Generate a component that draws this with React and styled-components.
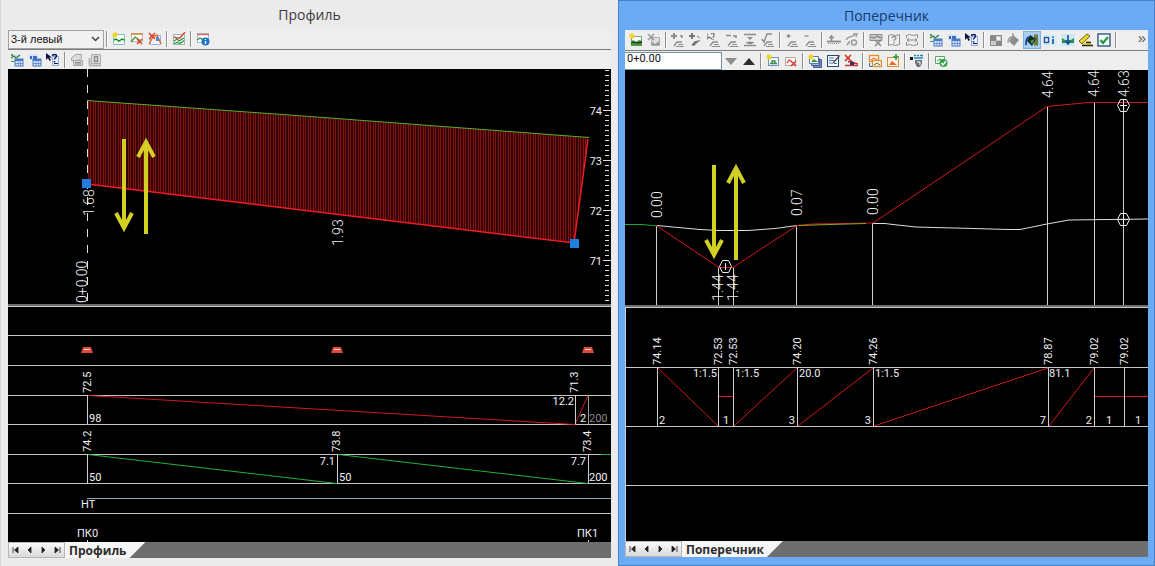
import React from "react";
import styled, { createGlobalStyle, css } from "styled-components";

const GlobalStyle = createGlobalStyle`
  *, *::before, *::after { box-sizing: border-box; }
  body {
    margin: 0;
    background: #ebebeb;
    color: #222;
    font-family: "Liberation Sans", Arial, sans-serif;
    font-size: 12px;
  }
`;

/* ---------- window frame ---------- */

const Workspace = styled.main`
  display: grid;
  grid-template-columns: minmax(0, 618fr) minmax(0, 537fr);
  align-items: start;
`;

const Window = styled.section`
  display: flex;
  flex-direction: column;
  ${(p) =>
    p.$active
      ? css`
          background: #6babf6;
          border: 1px solid #4480c4;
          padding: 0 6px 8px 6px;
        `
      : css`
          background: #ebebeb;
          border-left: 1px solid #d4d4d4;
          padding: 0 7px 8px 7px;
        `}
`;

const Title = styled.h1`
  margin: 0;
  height: 29px;
  padding-top: 5px;
  text-align: center;
  font-family: "Open Sans", "Noto Sans", sans-serif;
  font-size: 14px;
  font-weight: 400;
  line-height: 20px;
  color: ${(p) => (p.$active ? "#17396b" : "#3c3c3c")};
`;

/* ---------- toolbars ---------- */

const Toolbar = styled.div`
  display: flex;
  align-items: center;
  height: ${(p) => (p.$last ? 19 : 21)}px;
  padding-left: ${(p) => (p.$inset ? 2 : 0)}px;
  background: #eeeeee;
  border-bottom: ${(p) => (p.$last ? "0" : "1px solid #7c7c7c")};
  overflow: hidden;
`;

const Separator = styled.span`
  flex: none;
  width: 2px;
  height: 16px;
  margin: 0 2px;
  border-left: 1px solid #8f8f8f;
  border-right: 1px solid #fafafa;
`;

const ToolButton = styled.button`
  flex: none;
  display: flex;
  align-items: center;
  justify-content: center;
  width: 18px;
  height: 18px;
  margin: 0;
  padding: 0;
  border: 1px solid ${(p) => (p.$pressed ? "#7fb0dc" : "transparent")};
  background: ${(p) => (p.$pressed ? "#a9cdee" : "transparent")};
  color: inherit;
`;

const ToolIcon = styled.svg`
  flex: none;
  display: block;
  width: 14px;
  height: 14px;
`;

const Select = styled.select`
  appearance: none;
  flex: none;
  width: 96px;
  height: 19px;
  padding: 0 16px 0 2px;
  border: 1px solid #a3a3a3;
  border-radius: 0;
  background: transparent;
  color: #111;
  font-family: "Liberation Sans", Arial, sans-serif;
  font-size: 11px;
  line-height: 16px;
`;

const SelectBox = styled.span`
  flex: none;
  display: grid;
  align-items: center;
  justify-items: end;
  background: #f1f1f1;
  > * { grid-area: 1 / 1; }
`;

const Chevron = styled.svg`
  width: 9px;
  height: 6px;
  margin-right: 4px;
  pointer-events: none;
`;

const StationInput = styled.input`
  flex: none;
  width: 97px;
  height: 18px;
  padding: 0 2px 4px;
  border: 1px solid #6c93a6;
  border-left: 0;
  border-radius: 0;
  background: #fff;
  color: #111;
  font-family: "Roboto", sans-serif;
  font-size: 11px;
  line-height: 12px;
`;

const More = styled.button`
  margin-left: auto;
  padding: 0 2px 4px;
  border: 0;
  background: none;
  color: #555;
  font-family: "Liberation Sans", Arial, sans-serif;
  font-size: 15px;
  line-height: 16px;
`;

/* ---------- drawing panes ---------- */

const Pane = styled.svg`
  display: block;
  width: 100%;
  height: auto;
  background: #000;
`;

const Splitter = styled.div`
  height: 3px;
  background: #6f6f6f;
  border-bottom: 1px solid #c9c9c9;
`;

const BandText = styled.text`
  font-family: "Roboto", sans-serif;
  font-size: 11px;
  fill: ${(p) => (p.$dim ? "#8a8a8a" : "#f0f0f0")};
`;

const CadText = styled.text`
  font-family: "Roboto", sans-serif;
  font-size: 14px;
  font-weight: 300;
  fill: #f0f0f0;
`;

/* ---------- sheet tabs ---------- */

const TabBar = styled.div`
  display: flex;
  height: 16px;
  background: #6e6e6e;
`;

const TabNav = styled.div`
  display: flex;
  width: 57px;
  border: 1px solid #b8b8b8;
  background: linear-gradient(#fafafa, #d9d9d9);
`;

const NavButton = styled.button`
  flex: 1;
  display: flex;
  align-items: center;
  justify-content: center;
  padding: 0;
  border: 0;
  background: none;
`;

const Tab = styled.button`
  padding: 0 19px 0 4px;
  border: 0;
  background: #f6f6f6;
  clip-path: polygon(0 0, 100% 0, calc(100% - 16px) 100%, 0 100%);
  color: #2c2c2c;
  font-family: "Open Sans", "Noto Sans", sans-serif;
  font-size: 12px;
  font-weight: 700;
  line-height: 15px;
`;

/* ---------- icons, each on a 14 x 14 field ---------- */

const g = "#8c8c8c";

const Grid = ({ x = 5, y = 6, c = "#4a78c8" }) => (
  <g>
    <rect x={x} y={y} width="8" height="7" fill="#dfeaf8" stroke={c} />
    <path d={`M${x} ${y + 1}h8`} stroke={c} strokeWidth="2" />
    <path d={`M${x + 3} ${y}v7M${x + 5.5} ${y}v7M${x} ${y + 4.5}h8`} stroke={c} strokeWidth=".7" />
  </g>
);
const Sun = ({ x = 3, y = 3 }) => (
  <path d={`M${x} ${y - 3}v6M${x - 3} ${y}h6M${x - 2} ${y - 2}l4 4M${x + 2} ${y - 2}l-4 4`} stroke="#f3d423" strokeWidth="1.1" />
);
const Cross = ({ x = 7, y = 7, s = 5, c = "#e0402c" }) => (
  <path d={`M${x} ${y}l${s} ${s}M${x + s} ${y}l${-s} ${s}`} stroke={c} strokeWidth="1.5" />
);
const Hill = ({ x = 3, y = 8 }) => (
  <g stroke={g} fill="none">
    <path d={`M${x} ${y + 5}l3-4h5`} strokeWidth="1.3" />
    <path d={`M${x + 4} ${y + 3.5}h5M${x + 2} ${y + 5.5}h8`} />
  </g>
);
const Page = ({ c = "#4c78ad" }) => <rect x="1.5" y="1.5" width="11" height="11" fill="#f7fbff" stroke={c} />;

const ICONS = {
  profileNew: (
    <>
      <path d="M1.500 2.500h11v10h-11z" fill="#f8fff8" stroke="#7fbfb8" />
      <Sun />
      <path d="M2 8l2-1 3 2 3-2 2.500 1" stroke="#168b2d" strokeWidth="1.500" fill="none" />
    </>
  ),
  profileDelete: (
    <>
      <path d="M1.500 1.500h11v8h-11z" fill="#fff" stroke="#b9b4a4" />
      <path d="M1 2h12" stroke="#e57d34" strokeWidth="1.500" />
      <path d="M1 10l4-5 3 2 2 2" stroke="#2f9b37" strokeWidth="1.300" fill="none" />
      <Cross x={7} y={7} />
    </>
  ),
  profileClear: (
    <>
      <path d="M2.500 3.500h10v9h-10z" fill="#f4f6ff" stroke="#9faed4" />
      <path d="M1 12l4-7 4-2 4 9" stroke="#da6a2e" fill="none" strokeWidth="1.400" />
      <path d="M8 5h3v4H8z" fill="#5a86d0" />
      <Cross x={1} y={1} s={6} />
    </>
  ),
  profileEdit: (
    <>
      <path d="M1.500 2.500h11v10h-11z" fill="#fff" stroke="#a6b4a6" />
      <path d="M2 9l3-2 2 2 5-3M2 11.500l3-1 3 1 4-3" stroke="#18923b" strokeWidth="1.200" fill="none" />
      <path d="M2 5l3 1 3 0 5-6" stroke="#cf4636" strokeWidth="1.400" fill="none" />
    </>
  ),
  profileInfo: (
    <>
      <rect x="1.500" y="1.500" width="11" height="9" fill="#fff" stroke="#a7b9cc" />
      <path d="M1 2.500h12" stroke="#d86c66" strokeWidth="1.500" />
      <path d="M1 8l3-2 3 2" stroke="#28963c" strokeWidth="1.300" fill="none" />
      <circle cx="9.500" cy="9.500" r="4" fill="#1c72cf" />
      <path d="M9.500 7v1M9.500 9v3" stroke="#fff" strokeWidth="1.400" />
    </>
  ),
  tableProfile: (
    <>
      <path d="M1 1.500h9v7H1z" fill="#dcecdc" />
      <path d="M1 5l3-2 2 2 4-3M1 2h2" stroke="#2f7f43" strokeWidth="1.300" fill="none" />
      <path d="M1 8.500h4" stroke="#5f8f62" />
      <Grid />
    </>
  ),
  tableBand: (
    <>
      <path d="M1 1h9v6H1z" fill="#d5e4fa" />
      <path d="M2 3h2v3H2zM5 3h4v3H5z" fill="#3a69c7" />
      <Grid />
    </>
  ),
  help: (
    <>
      <path d="M6.500 3.500h6v9h-6z" fill="#eaf1ff" stroke="#91a7d3" />
      <path d="M0 0v7l2-2 1.500 3 1.500-1-1.500-2.500H6z" fill="#0b1640" />
      <path d="M6.500 3c0-2 4-2 4 0 0 1.500-2 1.500-2 3.500M8.500 8v1.500" stroke="#0b1e60" strokeWidth="1.500" fill="none" />
      <path d="M8 10.500h4" stroke="#0b1e60" />
    </>
  ),
  stackGray: (
    <g stroke="#a4a4a4" fill="#dcdcdc">
      <path d="M1.500 5l4-3.500h6v4l-3 2h-7z" />
      <path d="M3.500 7.500h9v5h-9z" />
      <path d="M5 9.500h6M5 11h6" stroke={g} />
    </g>
  ),
  frameGray: (
    <g stroke={g} fill="none">
      <path d="M3.500 1.500h9v9h-9z" fill="#e2e2e2" stroke="#aaa" />
      <path d="M1 12.500h12M1.500 5v7" strokeWidth="2" stroke="#b4b4b4" />
      <path d="M6.500 3.500h3v5h-3z" strokeWidth="1.500" />
    </g>
  ),
  sectionNew: (
    <>
      <path d="M2.500 3.500h10v9h-10z" fill="#f7fbf4" stroke="#7f9f7f" />
      <Sun />
      <path d="M2 9l2-2 3 2 3-2 3 1v5H2z" fill="#4b9a3d" />
      <path d="M2 10l3-1 3 1 5-1" stroke="#163a1c" strokeWidth="1.300" fill="none" />
    </>
  ),
  sectionDelete: (
    <>
      <path d="M4.500 4.500h8v8h-8z" fill="#e0e0e0" stroke="#aaa" />
      <path d="M5 9l3 2 4-3v4H5z" fill="#999" />
      <Cross x={1} y={1} s={6} c="#999" />
    </>
  ),
  ptAdd: (
    <>
      <path d="M3 0v6M0 3h6" stroke={g} strokeWidth="2" />
      <path d="M9 3h2v2" stroke={g} strokeWidth="1.500" fill="none" />
      <Hill />
    </>
  ),
  ptAddDark: (
    <>
      <path d="M3 0v6M0 3h6" stroke="#777" strokeWidth="2" />
      <path d="M8 3l3 2" stroke="#777" />
      <path d="M2 12l4-4 6-1-4 3-3 3z" fill="#777" />
    </>
  ),
  ptHelp: (
    <>
      <path d="M0 0v6l2-2 3 2M4 1c2-2 4 0 3 1L6 5M6 6v1" stroke="#777" strokeWidth="1.200" fill="none" />
      <Hill />
    </>
  ),
  ptRemove: (
    <>
      <path d="M1 2.500h5M8 3h3v2" stroke={g} strokeWidth="1.700" fill="none" />
      <Hill />
    </>
  ),
  ptBetween: (
    <g stroke={g} fill="none">
      <path d="M1 1.500h12M1 12.500h12" strokeWidth="1.500" />
      <path d="M4 4h6l-3 3zM4 11h6L7 8z" fill={g} stroke="none" />
      <path d="M3 9.500h8" />
    </g>
  ),
  ptCheck: (
    <>
      <path d="M1 6l2 3 3-8h5" stroke={g} strokeWidth="1.400" fill="none" />
      <Hill />
    </>
  ),
  smallAdd: (
    <>
      <path d="M3.500 1v4M1.500 3h4" stroke={g} strokeWidth="1.300" />
      <Hill />
    </>
  ),
  smallRemove: (
    <>
      <path d="M1.500 3h4" stroke={g} strokeWidth="1.300" />
      <Hill />
    </>
  ),
  levelUp: (
    <g stroke={g} fill="none">
      <path d="M4.500 2v6M2 4.500h5" strokeWidth="1.600" />
      <path d="M0 8.500h14" strokeWidth="1.800" />
      <path d="M1 10.500h12" strokeDasharray="1 1" />
    </g>
  ),
  loop: (
    <g stroke="#999" fill="none" strokeWidth="1.400">
      <path d="M1 7c2-4 6-3 9-5M8 1l4 0-1 3" />
      <circle cx="9" cy="9.500" r="2.500" />
      <path d="M2 12l3-4" />
    </g>
  ),
  layerGray: (
    <g stroke={g} fill="none">
      <path d="M1 1.500h12v6H1z" fill="#cfcfcf" />
      <path d="M2 4l3 1 3-2 4 2" strokeWidth="1.500" />
      <path d="M6 7l6 6M12 7l-6 6" strokeWidth="1.500" />
    </g>
  ),
  mapHelp: (
    <g stroke={g} fill="none">
      <path d="M1.500 2.500l3-1 4 1 4-1v10l-4 1-4-1-3 1z" />
      <path d="M5 5c0-2 4-2 4 0 0 1.500-2 1.500-2 3M7 9v1.500" strokeWidth="1.300" />
    </g>
  ),
  mapMove: (
    <g stroke={g} fill="none">
      <path d="M1.500 5V2.500l3-1 4 1 4-1V5M1.500 9v3.500l3-1 4 1 4-1V9" />
      <path d="M2 7h10M4 5L2 7l2 2M10 5l2 2-2 2" />
    </g>
  ),
  tilesGray: (
    <>
      <rect x="1.500" y="2.500" width="11" height="10" fill="#c9c9c9" stroke={g} />
      <path d="M2 3h5v5H2zM7 8h5v4H7z" fill="#888" />
      <path d="M8 4h3v3H8z" fill="#f4f4f4" />
    </>
  ),
  bucketGray: (
    <>
      <path d="M6 2l6 5-5 6-5-5z" fill="#8d8d8d" />
      <path d="M1 10c0-4 1-6 4-6M6 0v5" stroke="#999" strokeWidth="1.400" fill="none" />
    </>
  ),
  bucket: (
    <>
      <path d="M9 1.500h4v11H9z" fill="#6c7b38" />
      <path d="M5 2l6 4-4 7-5-5z" fill="#0d2c2c" />
      <path d="M1 12c0-6 1-8 4-8" stroke="#123c8c" strokeWidth="1.700" fill="none" />
      <path d="M5 8l2 3 3-5" fill="#4f9c4a" />
    </>
  ),
  infoCard: (
    <>
      <rect x="0" y="1" width="14" height="12" fill="#d9edf7" />
      <rect x="1.500" y="4.500" width="4" height="5" fill="#eef" stroke="#24569a" strokeWidth="1.400" />
      <path d="M10 3.500v1.500M10 6v5" stroke="#1e5ca8" strokeWidth="1.800" />
    </>
  ),
  arrowsGreen: (
    <>
      <rect x="0" y="1" width="14" height="12" fill="#cfe6f5" />
      <path d="M1 5l3 2h6l3-2v5H1z" fill="#2f8f4c" />
      <path d="M7 2v9M4.500 8L7 11l2.500-3" stroke="#124f9c" strokeWidth="1.600" fill="none" />
    </>
  ),
  ruler: (
    <>
      <path d="M0 8l8-7 3 2-8 8z" fill="#f1d520" stroke="#4b4510" strokeWidth=".8" />
      <path d="M3 13h11l-5-6z" fill="#f7e227" />
      <path d="M3 12.500h11M7 9.500h5" stroke="#222" strokeWidth="1.500" />
    </>
  ),
  checkBox: (
    <>
      <rect x="1" y="1" width="12" height="12" fill="#f7fcff" stroke="#31557f" strokeWidth="1.400" />
      <path d="M3.500 7l2.500 3 5-6" stroke="#1f9a35" strokeWidth="2.200" fill="none" />
    </>
  ),
  down: <path d="M1 4h12L7 11z" fill="#8e8e8e" />,
  up: <path d="M1 11h12L7 4z" fill="#2d2d2d" />,
  sheetNew: (
    <>
      <rect x="2.500" y="3.500" width="10" height="8" fill="#f3f8ff" stroke="#7592b6" />
      <Sun />
      <path d="M4 9.500h7M6 9V7h3v2" stroke="#3c8a46" strokeWidth="1.300" fill="none" />
    </>
  ),
  sheetDelete: (
    <>
      <rect x="1.500" y="3.500" width="10" height="8" fill="#fff" stroke="#b9a79f" />
      <path d="M3 9l2-3 3 2" stroke="#d64b32" strokeWidth="1.300" fill="none" />
      <Cross x={7} y={7} />
    </>
  ),
  sheets: (
    <>
      <path d="M5.500 5.500h8v8h-8z" fill="#7387c4" stroke="#4a5d9d" />
      <path d="M3.500 4.500h8v7h-8z" fill="#a9b7e1" stroke="#4a5d9d" />
      <path d="M1.500 2.500h9v7h-9z" fill="#f5fbf2" stroke="#5b77a4" />
      <Sun />
      <path d="M3 8l3-3 4 3z" fill="#3b9849" />
    </>
  ),
  sheetEdit: (
    <>
      <Page c="#284c6b" />
      <path d="M3 4h5M3 6.500h5M3 9h3M8 9.500h3" stroke="#3f72a6" />
      <path d="M13 1L7 8l-1 2 2-1 6-7z" fill="#454545" />
    </>
  ),
  lineDelete: (
    <>
      <Cross x={1} y={1} s={6} c="#d5271c" />
      <path d="M4 8l3-1 3 2 4 1" stroke="#d5271c" strokeWidth="1.500" fill="none" />
      <path d="M1 11.500h13" stroke="#c23a34" strokeWidth="1.500" />
      <path d="M6 8h4v3H6z" fill="#20336e" />
    </>
  ),
  copy: (
    <>
      <rect x="1.500" y="1.500" width="9" height="6" fill="#fff3e3" stroke="#e58b31" strokeWidth="1.300" />
      <path d="M3 6l3-2 3 2" stroke="#d9542b" fill="none" />
      <rect x="4.500" y="6.500" width="9" height="6" fill="#fff3e3" stroke="#e58b31" strokeWidth="1.300" />
      <path d="M6 11l3-2 3 2" stroke="#347d42" fill="none" />
      <path d="M1.500 9v3.500H4" stroke="#4869ad" fill="none" />
    </>
  ),
  copyMove: (
    <>
      <rect x="1.500" y="3.500" width="11" height="9" fill="#fff3e3" stroke="#e58b31" />
      <path d="M3 11l3-4 5 4z" fill="#e46a32" />
      <path d="M10 0v6M7 3h6" stroke="#2f9b3c" strokeWidth="1.600" />
    </>
  ),
  param: (
    <>
      <path d="M0 3h3v3H0z" fill="#111" />
      <path d="M4 1.500h2M7 1.500h2M10 1.500h3M4 4h9" stroke="#2689ac" strokeWidth="1.500" />
      <path d="M5 6h7v4l-2 3H7L5 9z" fill="#6d7680" />
      <path d="M7 8h3v3" stroke="#fff" fill="none" />
    </>
  ),
  apply: (
    <>
      <path d="M1.500 2.500h9v7h-9z" fill="#f6fff6" stroke="#66a06a" />
      <path d="M3 7l3-2 3 2" stroke="#2f8f3d" fill="none" />
      <circle cx="9.500" cy="9" r="4" fill="#2ea346" />
      <path d="M7.500 9l1.500 2 3-4" stroke="#fff" strokeWidth="1.500" fill="none" />
    </>
  ),
};

const Tools = ({ items }) =>
  items.map(([icon, label, pressed], i) =>
    icon === "|" ? (
      <Separator key={i} />
    ) : (
      <ToolButton key={i} type="button" aria-label={label} $pressed={pressed}>
        <ToolIcon viewBox="0 0 14 14" aria-hidden="true">{ICONS[icon]}</ToolIcon>
      </ToolButton>
    )
  );

const SEP = ["|"];
const TABLE_TOOLS = [
  ["tableProfile", "Таблица профиля"],
  ["tableBand", "Таблица подвала"],
  ["help", "Справка"],
];
const PROFILE_TOOLS = [
  SEP,
  ["profileNew", "Создать профиль"],
  ["profileDelete", "Удалить профиль"],
  ["profileClear", "Очистить профиль"],
  SEP,
  ["profileEdit", "Редактировать профиль"],
  SEP,
  ["profileInfo", "Сведения о профиле"],
];
const PROFILE_TABLES = [...TABLE_TOOLS, SEP, ["stackGray", "Слои"], ["frameGray", "Рамка"]];
const SECTION_TOOLS = [
  ["sectionNew", "Создать поперечник"],
  ["sectionDelete", "Удалить поперечник"],
  SEP,
  ["ptAdd", "Добавить точку"],
  ["ptAddDark", "Вставить точку"],
  ["ptHelp", "Указать точку"],
  ["ptRemove", "Удалить точку"],
  ["ptBetween", "Между точками"],
  ["ptCheck", "Проверить точку"],
  SEP,
  ["smallAdd", "Добавить отметку"],
  ["smallRemove", "Удалить отметку"],
  SEP,
  ["levelUp", "Уровень"],
  ["loop", "Контур"],
  SEP,
  ["layerGray", "Слой"],
  ["mapHelp", "Запрос"],
  ["mapMove", "Сдвиг"],
  SEP,
  ...TABLE_TOOLS,
  SEP,
  ["tilesGray", "Плитки"],
  ["bucketGray", "Заливка"],
  ["bucket", "Заливка слоёв", true],
  ["infoCard", "Сведения"],
  ["arrowsGreen", "Растянуть"],
  ["ruler", "Измерить"],
  ["checkBox", "Контроль"],
  SEP,
];
const STATION_TOOLS = [
  ["down", "Предыдущий"],
  ["up", "Следующий"],
  SEP,
  ["sheetNew", "Новый"],
  ["sheetDelete", "Удалить"],
  SEP,
  ["sheets", "Список"],
  ["sheetEdit", "Правка"],
  ["lineDelete", "Удалить линию"],
  SEP,
  ["copy", "Копировать"],
  ["copyMove", "Копировать в"],
  SEP,
  ["param", "Параметры"],
  SEP,
  ["apply", "Применить"],
];

/* ---------- drawing parts ---------- */

const Up = ({ as: Text = BandText, x, y, children }) => (
  <Text transform={`translate(${x} ${y}) rotate(-90)`}>{children}</Text>
);

const Rule = ({ x1, x2, y, c = "#c4c4c4" }) => (
  <path d={`M${x1} ${y + 0.5}H${x2}`} stroke={c} />
);

const Post = ({ x, y1, y2, c = "#cfcfcf" }) => (
  <path d={`M${x + 0.5} ${y1}V${y2}`} stroke={c} />
);

const Arrow = ({ x, from, to }) => {
  const s = to > from ? -1 : 1;
  return (
    <g stroke="#d3d024" strokeWidth="4" fill="none">
      <path d={`M${x} ${from}V${to + s * 5}`} />
      <path d={`M${x - 8} ${to + s * 20}L${x} ${to + s * 5}L${x + 8} ${to + s * 20}`} />
    </g>
  );
};

const Marker = ({ x, y, children }) => (
  <g stroke="#ededed" fill="none">
    <path d={`M${x - 6} ${y}l3-6h6l3 6l-3 6h-6z`} />
    {children}
  </g>
);

const Culvert = ({ x }) => (
  <g>
    <path d={`M${x - 4} 347h8l2 6h-12z`} fill="#dd4a3c" />
    <path d={`M${x - 3} 349.500h6`} stroke="#ffd9d2" strokeWidth="1" />
  </g>
);

const hatchTop = (x) => 100.5 + ((x - 87) * 37) / 501;
const hatchBottom = (x) => (x <= 574 ? 184 + ((x - 87) * 59) / 487 : 243 - ((x - 574) * 105) / 14);
const hatch = Array.from({ length: 200 }, (_, i) => Math.floor(88 + i * 2.5));
const ticks = Array.from({ length: 47 }, (_, i) => 70 + i * 5);
const levels = [[74, 110], [73, 160], [72, 210], [71, 260]];

const ProfileGraph = () => (
  <Pane viewBox="8 69 603 235" role="img" aria-label="Продольный профиль">
    <path d="M87.500 69V304" stroke="#e0e0e0" strokeDasharray="8 8" />
    <path d="M88 100.500L588 137.500L574 243L88 184z" fill="#360208" />
    <g stroke="#82140f" shapeRendering="crispEdges">
      {hatch.map((x) => (
        <path key={x} d={`M${x + 0.5} ${hatchTop(x)}V${hatchBottom(x)}`} />
      ))}
    </g>
    <path d="M87 100.500L310 116.500L589 137.500" stroke="#5cae2c" fill="none" />
    <path d="M87 184L574 243L588 139" stroke="#f01c24" strokeWidth="1.500" fill="none" />
    <rect x="82" y="179" width="9" height="9" fill="#1f7fe0" />
    <rect x="570" y="239" width="9" height="9" fill="#1f7fe0" />
    <Up as={CadText} x={94} y={216}>1.68</Up>
    <Up as={CadText} x={343} y={246}>1.93</Up>
    <Up as={CadText} x={87} y={303}>0+0.00</Up>
    <Arrow x={124} from={139} to={233} />
    <Arrow x={146} from={234} to={137} />
    <g stroke="#dcdcdc">
      {ticks.map((y) => (
        <path key={y} d={`M605 ${y + 0.5}h4`} />
      ))}
      {levels.map(([, y]) => (
        <path key={y} d={`M603 ${y + 0.5}h8`} />
      ))}
    </g>
    {levels.map(([label, y]) => (
      <BandText key={label} x="602" y={y + 5} textAnchor="end">{label}</BandText>
    ))}
  </Pane>
);

const ProfileBand = () => (
  <Pane viewBox="8 307 603 235" role="img" aria-label="Подвал профиля">
    {[335, 365, 395, 424, 454, 483, 513].map((y) => (
      <Rule key={y} x1={8} x2={611} y={y} />
    ))}
    <Rule x1={87} x2={611} y={498} c="#8fa6b6" />
    <Culvert x={87} />
    <Culvert x={337} />
    <Culvert x={588} />
    <path d="M88 395.500L575 424.500L588 395.500" stroke="#d0181f" fill="none" />
    <path d="M88 454.500L337 483.500M338 454.500L588 483.500M601 454.500h10" stroke="#1fb034" fill="none" />
    <Post x={87} y1={395} y2={424} />
    <Post x={575} y1={395} y2={424} />
    <Post x={588} y1={395} y2={424} c="#9a9a9a" />
    <Post x={87} y1={454} y2={483} />
    <Post x={337} y1={454} y2={483} />
    <Post x={588} y1={454} y2={483} />
    <Post x={87} y1={540} y2={542} />
    <Post x={588} y1={540} y2={542} />
    <Up x={91} y={393}>72.5</Up>
    <Up x={578} y={393}>71.3</Up>
    <Up x={91} y={452}>74.2</Up>
    <Up x={340} y={452}>73.8</Up>
    <Up x={591} y={452}>73.4</Up>
    <BandText x="89" y="422">98</BandText>
    <BandText x="574" y="405" textAnchor="end">12.2</BandText>
    <BandText x="580" y="422">2</BandText>
    <BandText x="589" y="422" $dim>200</BandText>
    <BandText x="89" y="481">50</BandText>
    <BandText x="335" y="465" textAnchor="end">7.1</BandText>
    <BandText x="339" y="481">50</BandText>
    <BandText x="586" y="465" textAnchor="end">7.7</BandText>
    <BandText x="589" y="481">200</BandText>
    <BandText x="81" y="508">НТ</BandText>
    <BandText x="77" y="537">ПК0</BandText>
    <BandText x="577" y="537">ПК1</BandText>
  </Pane>
);

const SectionGraph = () => (
  <Pane viewBox="625 70 523 235" role="img" aria-label="Поперечный профиль">
    <Post x={656} y1={226} y2={305} />
    <Post x={718} y1={267} y2={305} />
    <Post x={733} y1={267} y2={305} />
    <Post x={796} y1={226} y2={305} />
    <Post x={872} y1={223} y2={305} />
    <Post x={1047} y1={107} y2={305} />
    <Post x={1094} y1={103} y2={305} />
    <Post x={1123} y1={100} y2={305} />
    <path d="M657 225.500L678 227.500L700 229.500L718 230.500H748L775 228.500L797 225.500M873 223.500H885L893 224.500L916 227L973 228.500L1008 229.500H1020L1047 224L1069 220L1148 219" stroke="#dedede" fill="none" />
    <path d="M625 224.500L642 224.500L657 226" stroke="#21a637" fill="none" />
    <path d="M657 226L719 267.500H733L797 225.500L812 224L873 223L1047 106.500L1088 102.500H1148" stroke="#d0181f" fill="none" />
    <path d="M799 225.500L830 224.500L866 223.500" stroke="#8da31f" fill="none" />
    <Marker x={725.5} y={266.5}>
      <path d="M725.500 263v7" />
    </Marker>
    <Marker x={1123.5} y={105.5}>
      <path d="M1123.500 102v8M1120 105.500h7" />
    </Marker>
    <Marker x={1123.5} y={219.5}>
      <path d="M1123.500 215v9M1119 219.500h9" />
    </Marker>
    <Up as={CadText} x={662} y={218}>0.00</Up>
    <Up as={CadText} x={802} y={216}>0.07</Up>
    <Up as={CadText} x={878} y={215}>0.00</Up>
    <Up as={CadText} x={723} y={301}>1.44</Up>
    <Up as={CadText} x={738} y={301}>1.44</Up>
    <Up as={CadText} x={1053} y={98}>4.64</Up>
    <Up as={CadText} x={1099} y={97}>4.64</Up>
    <Up as={CadText} x={1129} y={97}>4.63</Up>
    <Arrow x={714} from={165} to={260} />
    <Arrow x={736} from={260} to={163} />
  </Pane>
);

const SECTION_LEVELS = [
  [657, "74.14"],
  [718, "72.53"],
  [733, "72.53"],
  [797, "74.20"],
  [873, "74.26"],
  [1048, "78.87"],
  [1094, "79.02"],
  [1124, "79.02"],
];

const SectionBand = () => (
  <Pane viewBox="625 308 523 233" role="img" aria-label="Подвал поперечника">
    <Post x={625} y1={308} y2={541} />
    {[367, 426, 485].map((y) => (
      <Rule key={y} x1={625} x2={1148} y={y} />
    ))}
    <path
      d="M658 368L718 426M718 396.500H734M734 426L797 368M798 426L873 368M874 426L1048 368M1049 426L1094 368M1094 396.500H1148"
      stroke="#d0181f"
      fill="none"
    />
    {SECTION_LEVELS.map(([x, label]) => (
      <g key={x}>
        <Post x={x} y1={367} y2={426} />
        <Up x={x + 4} y={365}>{label}</Up>
      </g>
    ))}
    <BandText x="717" y="377" textAnchor="end">1:1.5</BandText>
    <BandText x="735" y="377">1:1.5</BandText>
    <BandText x="799" y="377">20.0</BandText>
    <BandText x="875" y="377">1:1.5</BandText>
    <BandText x="1049" y="377">81.1</BandText>
    <BandText x="659" y="424">2</BandText>
    <BandText x="726" y="424" textAnchor="middle">1</BandText>
    <BandText x="795" y="424" textAnchor="end">3</BandText>
    <BandText x="871" y="424" textAnchor="end">3</BandText>
    <BandText x="1046" y="424" textAnchor="end">7</BandText>
    <BandText x="1092" y="424" textAnchor="end">2</BandText>
    <BandText x="1109" y="424" textAnchor="middle">1</BandText>
    <BandText x="1138" y="424" textAnchor="middle">1</BandText>
  </Pane>
);

const NAV = [
  ["В начало", "M1 1v6M6 1v6L2.500 4z"],
  ["Назад", "M5 1v6L2 4z"],
  ["Вперёд", "M3 1v6l3-3z"],
  ["В конец", "M7 1v6M2 1v6l3.500-3z"],
];

const Sheets = ({ name }) => (
  <TabBar>
    <TabNav>
      {NAV.map(([label, d]) => (
        <NavButton key={label} type="button" aria-label={label}>
          <svg width="8" height="8" viewBox="0 0 8 8" aria-hidden="true">
            <path d={d} fill="#222" stroke="#222" strokeWidth=".8" />
          </svg>
        </NavButton>
      ))}
    </TabNav>
    <Tab type="button">{name}</Tab>
  </TabBar>
);

export default function App() {
  return (
    <>
      <GlobalStyle />
      <Workspace>
        <Window>
          <Title>Профиль</Title>
          <Toolbar>
            <SelectBox>
              <Select aria-label="Профиль">
                <option>3-й левый</option>
              </Select>
              <Chevron viewBox="0 0 9 6" aria-hidden="true">
                <path d="M1 1l3.500 3.500L8 1" fill="none" stroke="#444" strokeWidth="1.500" />
              </Chevron>
            </SelectBox>
            <Tools items={PROFILE_TOOLS} />
          </Toolbar>
          <Toolbar $last>
            <Tools items={PROFILE_TABLES} />
          </Toolbar>
          <ProfileGraph />
          <Splitter />
          <ProfileBand />
          <Sheets name="Профиль" />
        </Window>
        <Window $active>
          <Title $active>Поперечник</Title>
          <Toolbar $inset>
            <Tools items={SECTION_TOOLS} />
            <More type="button" aria-label="Ещё">»</More>
          </Toolbar>
          <Toolbar $last>
            <StationInput aria-label="Пикет" defaultValue="0+0.00" />
            <Tools items={STATION_TOOLS} />
          </Toolbar>
          <SectionGraph />
          <Splitter />
          <SectionBand />
          <Sheets name="Поперечник" />
        </Window>
      </Workspace>
    </>
  );
}
